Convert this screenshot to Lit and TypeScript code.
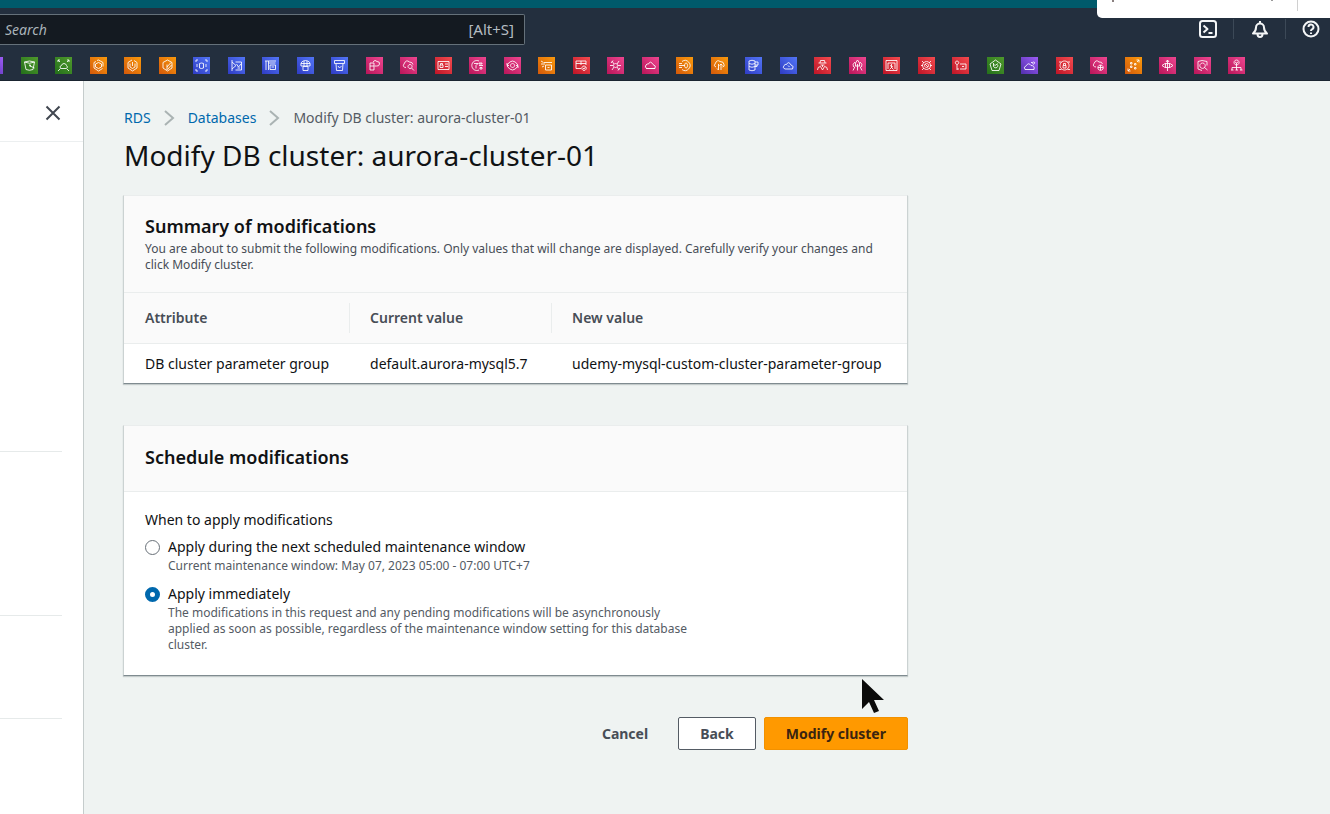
import { LitElement, html, css, svg } from "lit";
import { customElement, property, state } from "lit/decorators.js";

type Glyph = { name: string; tone: string; d: string };

const SERVICES: Glyph[] = [
  { name: "Service", tone: "purple", d: "M4 5h9v7H4z" },
  { name: "S3", tone: "green", d: "M3.500 5q5-2 10 0l-1.500 7.500q-3.500 1.500-7 0zM3.500 5q5 2.500 10 0M8 8.500l5.500 2.500M8 8h1.500v1.500" },
  { name: "EFS", tone: "green", d: "M3 3l2 2M14 3l-2 2M3 14l2-2M14 14l-2-2M3 5v-2h2M12 3h2v2M5.500 11.500h6q2-1.500 0-3q-.5-2-2.500-2t-2.500 2q-2.500.5-1 3" },
  { name: "ECR", tone: "orange", d: "M7 3.500l1.500-.5 4.500 2.500v4M12.500 11.500l-4 2.500-4.500-3v-5.500l2-1M8.500 5.500l3 1.500v3l-3 1.500-3-1.500v-3z" },
  { name: "ECS", tone: "orange", d: "M8 3l-4 2.500v5.500l4.500 3 4.500-3v-5.500l-3-2M8.500 5v4M6 6.500v3.500l2.500 1.500 2.500-1.500v-3.500" },
  { name: "EKS", tone: "orange", d: "M8.500 3l4.500 2.500v5.500l-4.500 3-4.500-3v-5.500zM8 7.500v5.500M12 5.500l-4 4.500M12.500 8l-4 4.500" },
  { name: "RDS", tone: "blue", d: "M3 5v-2h2M12 3h2v2M3 12v2h2M12 14h2v-2M6.500 6.500q2-1 4 0v4.500q-2 1-4 0zM4 7v3M13 7v3" },
  { name: "DMS", tone: "blue", d: "M4 3v11M4 5l4 3.500-4 3.500M7.500 5h6v8h-6M8.500 7l2 3 2.500-3M9.500 11h2.500" },
  { name: "DocumentDB", tone: "blue", d: "M3 4h11M4 4v9M6.500 4v9M6.500 6h7M8 8h5.500v4.500h-5.500zM9.500 10h2.500" },
  { name: "Neptune", tone: "blue", d: "M4 9q-1-5 4.500-5.500 5.500.5 4.500 5.500zM7 4v5M10 4v5M4 6.500h9M6 9.500h5v4h-5z" },
  { name: "DynamoDB", tone: "blue", d: "M3.500 3.500h10v3h-10zM5 6.500l.5 7h6l.5-7M7 9l1.500 2 2-2" },
  { name: "API Gateway", tone: "pink", d: "M4 6h4v7h-4zM4 9h4M7 5q2-3 4-.5q3 0 2.500 2.500t-3 2h-2" },
  { name: "CloudWatch", tone: "pink", d: "M6 10.500q-4-.5-2-3.500q2-5 5.500-2q3 0 3.500 2.500M10 7.500a2 2 0 1 0 .1 0M11.500 11l2.500 2.500" },
  { name: "IAM", tone: "red", d: "M3 4.500h11v8h-11zM5 8h3v2.500h-3zM5.500 8v-1.500h2v1.500M10 7h3M10 9.500h3" },
  { name: "Config", tone: "pink", d: "M10 4a5 5 0 1 0 0 9M5 6.500h4l-2 2v3M10 6h3v1h-3zM10 8.500h4M11 10.500h2v1.500h-2z" },
  { name: "Systems Manager", tone: "pink", d: "M3 8q5.500-8 11 0M14 9q-5.500 8-11 0M8.500 6.500a2 2 0 1 0 .1 0M3 6v2.500h2M14 11v-2.500h-2" },
  { name: "Firehose", tone: "orange", d: "M3 4l2.500 1.500M3 7h4M4 10l2-1M6 5.500h8M7.500 8h6v5h-6zM9.500 10.500h2" },
  { name: "Audit Manager", tone: "red", d: "M3 4h10v4M3 4v7.500h5M3 6.500h10M8 4v4M11 9a2.200 2.200 0 1 0 .1 0M10 11l1 1 1.500-2" },
  { name: "OpsWorks", tone: "pink", d: "M5 4l2 3M12 4l-2 3M5 13l2-3M12 13l-2-3M3 8.500h3M11 8.500h3M8.500 6.500a2 2 0 1 0 .1 0M4 6l2-2.500M13 11l-2 2.500" },
  { name: "CloudTrail", tone: "pink", d: "M5 11.500q-3-1-1-3.500q1-1.500 2.500-1q2-4 4.500.5q3.500 1 2 4zM4 11.500h9" },
  { name: "Direct Connect", tone: "orange", d: "M6 4.500a5 5 0 1 1 0 8M3 8.500h6M3 6.500h3M3 10.500h3M10 6a1.500 2.500 0 1 0 .1 0" },
  { name: "Transfer", tone: "orange", d: "M5 10q-3-1-1-3q2-5 5-2.500q4 0 4 3q1 2-1.500 2.500M7.500 7v6M10 13v-6M6 11.500l1.500 1.500M8.500 8.500l1.500-1.500 1.500 1.500" },
  { name: "ElastiCache", tone: "blue", d: "M4 4q3-1.500 6 0v9q-3 1.500-6 0zM4 6.500q3 1.500 6 0M4 9.500q3 1.500 6 0M10 5h3v3h-3M12 8v1.500h-2" },
  { name: "Cloud Database", tone: "blue", d: "M5 12q-3-1-1-3.500q1-1.500 2.500-1q2-4 4.500.5q3.500 1 1.500 4zM8 8.500l1.500 1.500" },
  { name: "Inspector", tone: "red", d: "M4.500 6h8M6 6l.5-2.500h4l.5 2.500M6.500 8h4M8.500 8v2M3.500 13q0-3.500 3-3.500l2 3.500 2-3.500q3 0 3 3.500" },
  { name: "Rocket", tone: "pink", d: "M8.500 3q3 3 2 6h-4q-1-3 2-6zM6 5q-3 2-1.500 5M11 5q3 2 1.500 5M8.500 7v6.500M6 9.500l-2 4M11 9.500l2 4" },
  { name: "Certificate Manager", tone: "red", d: "M3 3.500h11v10h-11zM5 6h7M5 6v6M12 6v6M8.500 7v4M7 8.500l3 1.500M6.500 12.500l2-2 2 2" },
  { name: "GuardDuty", tone: "red", d: "M8.500 4.500a4 4 0 1 0 .1 0M8.500 6.500a2 2 0 1 0 .1 0M3 8.500h2M12 8.500h2M4 4l2 2M13 4l-2 2M4 13l2-2M13 13l-2-2M7 7l3 3" },
  { name: "KMS", tone: "red", d: "M5 4a1.700 1.700 0 1 0 .1 0M5 7.500v5.500M5 12h2M8 7h6v5h-6M10 9.500h2" },
  { name: "Health", tone: "green", d: "M8.500 3l5.500 4-2 6.500h-7l-2-6.500zM6.500 8a2.200 2.200 0 1 0 4-.5M6.500 6v2h2M10.500 6.500l-2 2" },
  { name: "CloudFront", tone: "purple", d: "M4 12.500q-2-2.500 1.500-4q2-3.500 4.500 0q4 0 3 4zM12.500 5a1 1 0 1 0 .1 0M10 6l1-1" },
  { name: "Shield", tone: "red", d: "M8.500 4a4.500 4.500 0 1 0 .1 0M7 8.500h3v2.500h-3zM7.500 8.500v-2h2v2M3 5h2.500M11.500 5h2.500M3 12.500h2.500M11.500 12.500h2.500" },
  { name: "Cloud Map", tone: "pink", d: "M6 10q-4-.5-2-3.500q2-4.500 5-1.500q3-.5 3.500 2M10.500 8a2.700 2.700 0 1 0 .1 0M8 10.500h5M10.500 8v5" },
  { name: "Step Functions", tone: "orange", d: "M3 14l2-2M12 5l2-2M11.500 3h2.500v2.500M3 11.500v2.500h2.500M5.500 5.500h1.500v1.500h-1.500zM9.500 6.500h1.500v1.500h-1.500zM5.500 9h1.500v1.500h-1.500zM9.500 10.500h1.500v1.500h-1.500z" },
  { name: "Route", tone: "pink", d: "M8.500 3v11M7 5l1.500-2 1.500 2M3 8.500l3-2h5l3 2-3 2h-5zM6.500 6.500v4M10.500 6.500v4" },
  { name: "Cost Explorer", tone: "pink", d: "M4 4.500l4-1 5 1v4M4 4.500v7.500l4 1.500M8.500 6a2.700 2.700 0 1 0 .1 0M10.500 10.500l3 2.500" },
  { name: "Organizations", tone: "pink", d: "M8.500 3a2.500 2.500 0 1 0 .1 0M8.500 6v7M4 13v-2.500h9v2.500M3 13h2.500M7.500 13h2.500M12 13h2.500M7 5l1.500 1 1.500-1" },
];

const CONSOLE_ICON = svg`<rect x="2" y="2" width="16" height="16" rx="2.500"/><path d="M5.500 6.500l4 3.500-4 3.500M10.500 14h4"/>`;
const BELL_ICON = svg`<path d="M10 2v2M3 14.500q3-2.500 3-6a4 4 0 0 1 8 0q0 3.500 3 6zM7.500 15q0 3 2.500 3t2.500-3"/>`;
const HELP_ICON = svg`<circle cx="10" cy="10" r="7.500"/><path d="M7.500 8a2.500 2.500 0 1 1 3.500 2.300q-1 .5-1 1.700M10 13.500v1.500"/>`;

@customElement("service-icon")
class ServiceIcon extends LitElement {
  @property() tone = "blue";
  @property() d = "";
  @property() name = "";

  static styles = css`
    :host { display: block; flex: none; }
    .tile { display: block; width: 17px; height: 17px; }
    .green { background: linear-gradient(45deg, #24701b, #4f9a2c); }
    .orange { background: linear-gradient(45deg, #d4590a, #fa9a0c); }
    .blue { background: linear-gradient(45deg, #2f3cc4, #5275f6); }
    .pink { background: linear-gradient(45deg, #b91659, #ee4590); }
    .red { background: linear-gradient(45deg, #be1527, #f44a4e); }
    .purple { background: linear-gradient(45deg, #5230ad, #9d5cf5); }
    svg { display: block; fill: none; stroke: #fff; stroke-opacity: 0.85; stroke-width: 1; }
  `;

  render() {
    return html`<a class="tile ${this.tone}" href="#" aria-label=${this.name}>
      <svg width="17" height="17" viewBox="0 0 17 17"><path d=${this.d} /></svg>
    </a>`;
  }
}

@customElement("console-header")
class ConsoleHeader extends LitElement {
  static styles = css`
    :host { display: block; background: #232f3e; border-top: 8px solid #005a6b; }
    .bar { display: flex; justify-content: space-between; align-items: center; height: 42px; }
    .search { display: flex; align-items: center; box-sizing: border-box; flex: 0 1 525px; height: 31px; padding: 0 10px 0 5px; background: #141a21; border: 1px solid #65717a; border-left: 0; border-radius: 0 2px 2px 0; }
    input { flex: 1; min-width: 0; padding: 0; border: 0; outline: 0; background: none; color: #d5dbdb; font: italic 14px "Noto Sans", sans-serif; }
    input::placeholder { color: #a9b3b9; opacity: 1; }
    kbd { color: #b4bcc2; font: 15px "Noto Sans", sans-serif; }
    .tools { display: flex; align-items: center; padding-right: 9px; }
    .tool { display: flex; justify-content: center; box-sizing: border-box; width: 52px; height: 20px; padding: 0; border: 0; border-left: 1px solid #3c4957; background: none; }
    .tool:first-child { border-left-color: transparent; }
    .tool:last-child { width: auto; padding-left: 15px; }
    .tool svg { width: 20px; height: 20px; fill: none; stroke: #f4f6f7; stroke-width: 2; stroke-linejoin: round; }
    .favorites { display: flex; justify-content: space-between; align-items: center; height: 30px; margin-left: -14px; padding-right: 85px; border-bottom: 1px solid #1a2430; }
  `;

  render() {
    return html`
      <div class="bar">
        <label class="search">
          <input type="search" placeholder="Search" aria-label="Search" />
          <kbd>[Alt+S]</kbd>
        </label>
        <div class="tools">
          <button class="tool" aria-label="CloudShell"><svg viewBox="0 0 20 20">${CONSOLE_ICON}</svg></button>
          <button class="tool" aria-label="Notifications"><svg viewBox="0 0 20 20">${BELL_ICON}</svg></button>
          <button class="tool" aria-label="Help"><svg viewBox="0 0 20 20">${HELP_ICON}</svg></button>
        </div>
      </div>
      <nav class="favorites" aria-label="Favorites">
        ${SERVICES.map((s) => html`<service-icon .name=${s.name} .tone=${s.tone} .d=${s.d}></service-icon>`)}
      </nav>
    `;
  }
}

@customElement("app-root")
class AppRoot extends LitElement {
  @state() private when = "now";

  static styles = css`
    :host { display: flex; flex-direction: column; min-height: 100vh; position: relative; overflow: hidden; background: #eff3f2; color: #101214; font: 14px/22px "Noto Sans", sans-serif; }
    .popup { position: absolute; top: 0; right: 0; width: 233px; height: 18px; box-sizing: border-box; background: #fff; border-radius: 0 0 0 5px; }
    .popup::before { content: ""; position: absolute; left: 15px; top: 0; width: 2px; height: 2px; background: #8a8080; box-shadow: 159px -1px #9a9a9a; }
    .popup::after { content: ""; position: absolute; left: 200px; top: 0; width: 1px; height: 11px; background: #d0d0d0; }
    .body { display: flex; flex: 1; }
    .side { flex: 0 0 83px; background: #fff; border-right: 1px solid #c5cccc; }
    .side-head { display: flex; justify-content: flex-end; align-items: center; height: 56px; padding: 4px 20px 0 0; border-bottom: 1px solid #eceff0; }
    .close { display: flex; padding: 0; border: 0; background: none; }
    .close svg { width: 20px; height: 20px; stroke: #414750; stroke-width: 2; }
    .rule { margin: 0 21px 0 0; border: 0; border-top: 1px solid #e6eaea; }
    .rule-a { padding-top: 163px; margin-top: 309px; }
    .rule-b { padding-top: 102px; }
    main { flex: 0 1 785px; min-width: 0; padding: 26px 40px 25px 39px; }
    .crumbs { display: flex; align-items: center; gap: 13px; padding-left: 1px; color: #545b64; }
    .crumbs a { color: #0068ad; text-decoration: none; }
    .crumbs svg { width: 11px; height: 18px; fill: none; stroke: #aab3b3; stroke-width: 2; }
    h1 { margin: 8px 0 22px; padding-left: 1px; font-size: 28px; line-height: 36px; font-weight: 400; }
    h2 { margin: 0; font-size: 18px; line-height: 22px; font-weight: 600; }
    .card { background: #fff; border: 1px solid #cbd2d2; border-top-color: #eaeded; border-bottom-color: #7f8b90; box-shadow: 0 1px 1px #c4cbcb; }
    .card-head { padding: 19px 21px; background: #fafafa; border-bottom: 1px solid #eaeded; }
    .card-head p { margin: 4px 0 0; font-size: 12px; line-height: 16px; color: #474d56; }
    .schedule { margin-top: 41px; }
    .schedule .card-head { padding: 20px 21px 23px; }
    table { width: 100%; border-collapse: collapse; text-align: left; }
    .col-attribute { width: 225px; }
    .col-current { width: 202px; }
    th { padding: 10px 0; background: #fafafa; border-bottom: 1px solid #eaeded; color: #474d56; font-weight: 600; }
    th span { display: block; padding: 4px 20px; border-left: 1px solid #eaeded; }
    th:first-child span { border-color: transparent; }
    td { padding: 9px 20px 8px 21px; white-space: nowrap; }
    fieldset { margin: 0; padding: 17px 21px 22px; border: 0; }
    legend { float: left; width: 100%; padding: 0; }
    .choice { display: grid; grid-template-columns: 15px 1fr; column-gap: 8px; clear: both; max-width: 550px; padding-top: 5px; align-items: center; }
    .choice + .choice { padding-top: 9px; }
    .choice input { appearance: none; box-sizing: border-box; width: 15px; height: 15px; margin: 0; border: 1px solid #687078; border-radius: 50%; background: #fff; }
    .choice input:checked { border: 5px solid #0068ad; }
    .choice small { grid-column: 2; font-size: 12px; line-height: 16px; color: #545b64; }
    .actions { display: flex; justify-content: flex-end; gap: 8px; margin-top: 41px; }
    .actions button { height: 33px; padding: 0 21px; border: 1px solid transparent; border-radius: 2px; background: none; color: #474d56; font: 700 14px/20px "Noto Sans", sans-serif; }
    .actions .back { border-color: #545b64; background: #fff; }
    .actions .submit { border-color: #f29100; background: #ff9900; color: #3a2410; }
    .pointer { position: absolute; left: 861px; top: 678px; width: 26px; height: 36px; }
  `;

  private choice(value: string, label: string, note: string) {
    return html`<div class="choice">
      <input type="radio" name="when" id=${value} aria-describedby="${value}-note" .checked=${this.when === value} @change=${() => (this.when = value)} />
      <label for=${value}>${label}</label>
      <small id="${value}-note">${note}</small>
    </div>`;
  }

  render() {
    const sep = html`<svg viewBox="0 0 11 18" aria-hidden="true"><path d="M1 2l8 7-8 7" /></svg>`;
    return html`
      <console-header></console-header>
      <div class="body">
        <aside class="side">
          <div class="side-head">
            <button class="close" aria-label="Close navigation"><svg viewBox="0 0 20 20"><path d="M3.500 3.500l13 13M16.500 3.500l-13 13" /></svg></button>
          </div>
          <hr class="rule rule-a" />
          <hr class="rule rule-b" />
          <hr class="rule" />
        </aside>
        <main>
          <nav class="crumbs" aria-label="Breadcrumb">
            <a href="#">RDS</a>${sep}<a href="#">Databases</a>${sep}<span>Modify DB cluster: aurora-cluster-01</span>
          </nav>
          <h1>Modify DB cluster: aurora-cluster-01</h1>
          <section class="card">
            <div class="card-head">
              <h2>Summary of modifications</h2>
              <p>You are about to submit the following modifications. Only values that will change are displayed. Carefully verify your changes and click Modify cluster.</p>
            </div>
            <table>
              <thead><tr><th class="col-attribute"><span>Attribute</span></th><th class="col-current"><span>Current value</span></th><th><span>New value</span></th></tr></thead>
              <tbody><tr><td>DB cluster parameter group</td><td>default.aurora-mysql5.7</td><td>udemy-mysql-custom-cluster-parameter-group</td></tr></tbody>
            </table>
          </section>
          <section class="card schedule">
            <div class="card-head"><h2>Schedule modifications</h2></div>
            <fieldset>
              <legend>When to apply modifications</legend>
              ${this.choice("window", "Apply during the next scheduled maintenance window", "Current maintenance window: May 07, 2023 05:00 - 07:00 UTC+7")}
              ${this.choice("now", "Apply immediately", "The modifications in this request and any pending modifications will be asynchronously applied as soon as possible, regardless of the maintenance window setting for this database cluster.")}
            </fieldset>
          </section>
          <div class="actions">
            <button>Cancel</button>
            <button class="back">Back</button>
            <button class="submit">Modify cluster</button>
          </div>
        </main>
      </div>
      <div class="popup"></div>
      <svg class="pointer" viewBox="0 0 26 36" aria-hidden="true"><path d="M1 1v30l7-7 5 11 5-2-5-11h10z" fill="#0b0b0b" /></svg>
    `;
  }
}
